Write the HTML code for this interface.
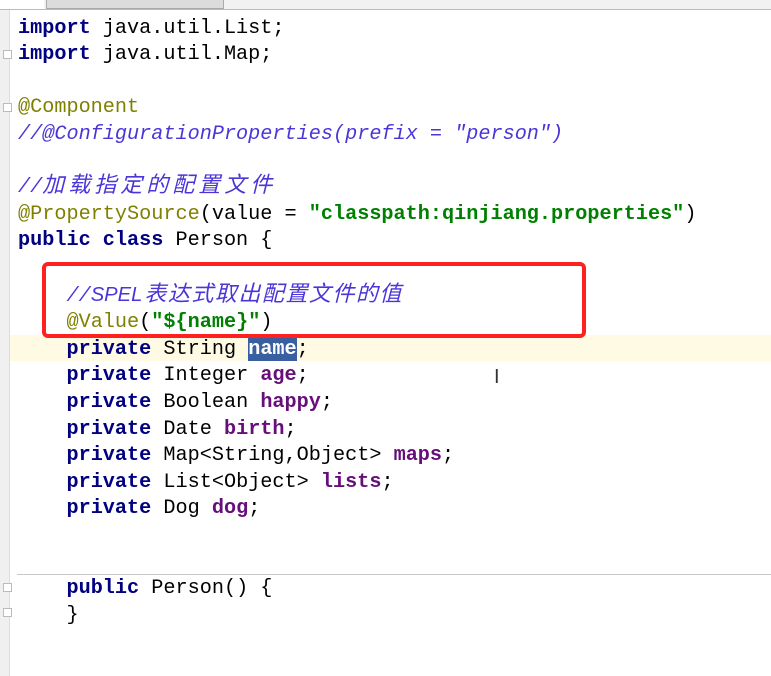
<!DOCTYPE html>
<html><head><meta charset="utf-8"><style>
html,body{margin:0;padding:0;width:771px;height:676px;overflow:hidden;background:#fff;position:relative}
.tabs{position:absolute;left:0;top:0;width:771px;height:9px;background:#f2f2f2;border-bottom:1px solid #bbb}
.tab1{position:absolute;left:0;top:0;width:44px;height:9px;background:#fff}
.tab2{position:absolute;left:46px;top:0;width:176px;height:8px;background:#dcdcdc;border:1px solid #aaa;border-top:none}
.gutter{position:absolute;left:0;top:10px;width:9px;height:666px;background:#f0f0f0;border-right:1px solid #ddd}
.cur{position:absolute;left:10px;top:335px;width:761px;height:26px;background:#fffae3}
.sep{position:absolute;left:17px;top:574px;width:754px;height:1px;background:#c8c8c8}
.code{position:absolute;left:18px;top:15.6px;font-family:"Liberation Mono","Noto Sans CJK SC",monospace;font-size:20.2px;line-height:26.6px;white-space:pre;color:#000}
.k{color:#000080;font-weight:bold}
.a{color:#808000}
.c{color:#4a35d8;font-style:italic}
.cj{font-family:"Noto Sans CJK SC",sans-serif;font-size:22px;line-height:0;font-style:italic}
.sp{font-family:"Liberation Sans",sans-serif;font-style:italic;margin-right:2px}
.s{color:#008000;font-weight:bold}
.f{color:#660e7a;font-weight:bold}
.sel{background:#3a5fa0;color:#fff}
.box{position:absolute;left:42px;top:262px;width:536px;height:68px;border:4px solid #ff2020;border-radius:6px}
.caret{position:absolute;left:494px;top:366px;font:20px "Liberation Sans",sans-serif;color:#333}
.fold{position:absolute;left:3px;width:9px;height:9px;border:1px solid #bbb;background:#fff;box-sizing:border-box}
</style></head><body>
<div class="tabs"><div class="tab1"></div><div class="tab2"></div></div>
<div class="gutter"></div>
<div class="cur"></div>
<div class="sep"></div>
<div class="fold" style="top:50px"></div>
<div class="fold" style="top:103px"></div>
<div class="fold" style="top:583px"></div>
<div class="fold" style="top:608px"></div>
<div class="code"><span class="k">import</span> java.util.List;
<span class="k">import</span> java.util.Map;

<span class="a">@Component</span>
<span class="c">//@ConfigurationProperties(prefix = "person")</span>

<span class="c">//<span class="cj" style="letter-spacing:4px">加载指定的配置文件</span></span>
<span class="a">@PropertySource</span>(value = <span class="s">"classpath:qinjiang.properties"</span>)
<span class="k">public class</span> Person {

    <span class="c">//<span class="sp">SPEL</span><span class="cj" style="letter-spacing:1.5px">表达式取出配置文件的值</span></span>
    <span class="a">@Value</span>(<span class="s">"${name}"</span>)
    <span class="k">private</span> String <span class="f sel">name</span>;
    <span class="k">private</span> Integer <span class="f">age</span>;
    <span class="k">private</span> Boolean <span class="f">happy</span>;
    <span class="k">private</span> Date <span class="f">birth</span>;
    <span class="k">private</span> Map&lt;String,Object&gt; <span class="f">maps</span>;
    <span class="k">private</span> List&lt;Object&gt; <span class="f">lists</span>;
    <span class="k">private</span> Dog <span class="f">dog</span>;


    <span class="k">public</span> Person() {
    }</div>
<div class="box"></div>
<div class="caret">I</div>
</body></html>
